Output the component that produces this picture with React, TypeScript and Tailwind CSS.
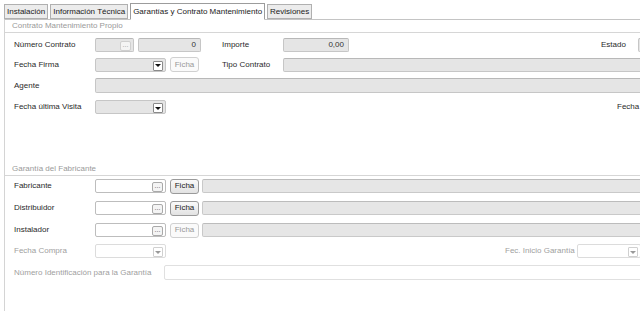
import React from 'react';

const font = { fontFamily: '"Liberation Sans", Arial, sans-serif' };

const Dots: React.FC<{ disabled?: boolean }> = ({ disabled }) => (
  <span
    className={`absolute right-[2px] top-[2px] flex h-[10px] w-[11px] items-end justify-center rounded-[2px] border bg-[#f4f4f4] pb-[2px] text-[7px] leading-none ${
      disabled ? 'border-[#cfcfcf] text-[#9a9a9a]' : 'border-[#a9a9a9] text-[#555]'
    }`}
  >
    ...
  </span>
);

const Arrow: React.FC<{ light?: boolean }> = ({ light }) => (
  <span
    className={`absolute right-[2px] top-[2px] flex h-[10px] w-[10px] items-center justify-center rounded-[1px] border bg-white ${
      light ? 'border-[#d0d0d0]' : 'border-[#8a8a8a]'
    }`}
  >
    <span
      className={`h-0 w-0 border-x-[3px] border-t-[3px] border-x-transparent ${
        light ? 'border-t-[#999]' : 'border-t-[#111]'
      }`}
    />
  </span>
);

const GrayField: React.FC<{ w: string; children?: React.ReactNode; dots?: boolean }> = ({ w, children, dots }) => (
  <div
    className={`relative flex h-[14px] shrink-0 items-center justify-end rounded-[2px] border border-[#c6c6c6] border-t-[#b8b8b8] bg-[#e5e5e5] pr-[4px] text-[8px] text-[#333] ${w}`}
  >
    {children}
    {dots && <Dots disabled />}
  </div>
);

const WhiteField: React.FC<{ w: string; dots?: boolean; arrow?: boolean; light?: boolean }> = ({ w, dots, arrow, light }) => (
  <div
    className={`relative h-[14px] shrink-0 rounded-[2px] border bg-white ${light ? 'border-[#dcdcdc]' : 'border-[#bdbdbd]'} ${w}`}
  >
    {dots && <Dots />}
    {arrow && <Arrow light={light} />}
  </div>
);

const GrayDrop: React.FC = () => (
  <div className="relative h-[14px] w-[71px] shrink-0 rounded-[2px] border border-[#c6c6c6] bg-[#e5e5e5]">
    <Arrow />
  </div>
);

const Ficha: React.FC<{ disabled?: boolean }> = ({ disabled }) => (
  <div
    className={`flex h-[15px] w-[29px] shrink-0 items-center justify-center rounded-[3px] border text-[8px] ${
      disabled
        ? 'border-[#d0d0d0] bg-[#fafafa] text-[#999]'
        : 'border-[#9a9a9a] bg-gradient-to-b from-[#fafafa] to-[#e2e2e2] text-[#222]'
    }`}
  >
    Ficha
  </div>
);

const Label: React.FC<{ w: string; children: React.ReactNode; light?: boolean }> = ({ w, children, light }) => (
  <span className={`shrink-0 whitespace-nowrap text-[8px] ${light ? 'text-[#a0a0a0]' : 'text-[#2a2a2a]'} ${w}`}>
    {children}
  </span>
);

const GroupTitle: React.FC<{ children: React.ReactNode; mt: string }> = ({ children, mt }) => (
  <div className={`flex h-[13px] items-center border-b border-[#d6d6d6] pl-[7px] text-[8px] text-[#9a9a9a] ${mt}`}>
    {children}
  </div>
);

const tabs = ['Instalación', 'Información Técnica', 'Garantías y Contrato Mantenimiento', 'Revisiones'];

export default function App() {
  return (
    <div className="h-[320px] w-[640px] overflow-hidden bg-white" style={font}>
      {/* Tab strip */}
      <div className="flex items-end gap-[2px] pl-[4px] pt-[3px]">
        {tabs.map((t, i) => {
          const active = i === 2;
          return (
            <div
              key={t}
              className={`flex items-center whitespace-nowrap border px-[2px] text-[8px] text-[#1a1a1a] ${
                active
                  ? 'relative z-10 -mb-px h-[17px] border-[#9c9c9c] border-b-white bg-white'
                  : 'h-[15px] border-[#b0b0b0] bg-[#ececec]'
              }`}
            >
              {t}
            </div>
          );
        })}
      </div>

      {/* Panel */}
      <div className="ml-[4px] h-[292px] w-[680px] border-l border-t border-[#c4c4c4] border-l-[#d4d4d4]">
        <GroupTitle mt="mt-0">Contrato Mantenimiento Propio</GroupTitle>

        <div className="pl-[9px]">
          {/* Número Contrato */}
          <div className="mt-[5px] flex h-[14px] items-center">
            <Label w="w-[81px]">Número Contrato</Label>
            <GrayField w="w-[39px]" dots />
            <GrayField w="w-[63px] ml-[4px]">0</GrayField>
            <Label w="w-[61px] ml-[21px]">Importe</Label>
            <GrayField w="w-[66px]">0,00</GrayField>
            <Label w="w-[37px] ml-[252px]">Estado</Label>
            <GrayField w="w-[40px]" />
          </div>

          {/* Fecha Firma */}
          <div className="mt-[5px] flex h-[15px] items-center">
            <Label w="w-[81px]">Fecha Firma</Label>
            <GrayDrop />
            <div className="ml-[4px]">
              <Ficha disabled />
            </div>
            <Label w="w-[61px] ml-[23px]">Tipo Contrato</Label>
            <GrayField w="w-[380px]" />
          </div>

          {/* Agente */}
          <div className="mt-[6px] flex h-[15px] items-center">
            <Label w="w-[81px]">Agente</Label>
            <div className="h-[15px] w-[560px] shrink-0 rounded-[2px] border border-[#c6c6c6] border-t-[#b8b8b8] bg-[#e5e5e5]" />
          </div>

          {/* Fecha última Visita */}
          <div className="mt-[7px] flex h-[14px] items-center">
            <Label w="w-[81px]">Fecha última Visita</Label>
            <GrayDrop />
            <Label w="w-[40px] ml-[451px]">Fecha</Label>
          </div>
        </div>

        <GroupTitle mt="mt-[49px]">Garantía del Fabricante</GroupTitle>

        <div className="pl-[9px]">
          {(['Fabricante', 'Distribuidor', 'Instalador'] as const).map((name, i) => (
            <div key={name} className={`flex h-[14px] items-center ${i === 0 ? 'mt-[3px]' : 'mt-[8px]'}`}>
              <Label w="w-[81px]">{name}</Label>
              <WhiteField w="w-[71px]" dots />
              <div className="ml-[4px]">
                <Ficha disabled={i === 2} />
              </div>
              <div className="ml-[3px] h-[14px] w-[450px] shrink-0 rounded-[2px] border border-[#c9c9c9] border-t-[#bcbcbc] bg-[#e6e6e6]" />
            </div>
          ))}

          {/* Fecha Compra */}
          <div className="mt-[7px] flex h-[14px] items-center">
            <Label w="w-[81px]" light>Fecha Compra</Label>
            <WhiteField w="w-[71px]" arrow light />
            <Label w="w-[72px] ml-[339px]" light>Fec. Inicio Garantía</Label>
            <WhiteField w="w-[64px]" arrow light />
          </div>

          {/* Número Identificación */}
          <div className="mt-[7px] flex h-[15px] items-center">
            <Label w="w-[150px]" light>Número Identificación para la Garantía</Label>
            <div className="h-[15px] w-[480px] shrink-0 rounded-[2px] border border-[#e0e0e0] bg-white" />
          </div>
        </div>
      </div>
    </div>
  );
}
